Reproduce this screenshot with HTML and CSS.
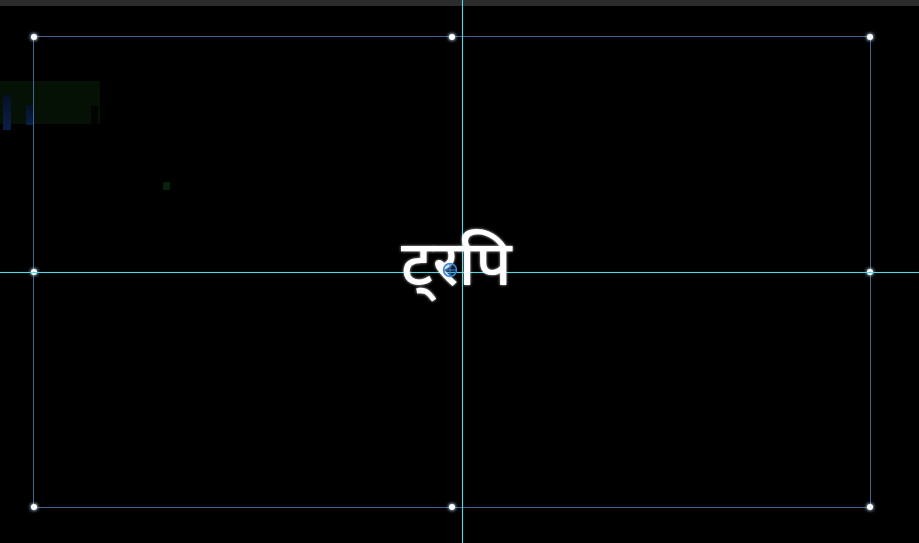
FILE: index.html
```html
<!DOCTYPE html>
<html lang="hi">
<head>
    <meta charset="UTF-8">
    <title>Canvas</title>
    <link rel="stylesheet" href="styles.css">
</head>
<body>
    <div class="topbar"></div>
    <div class="canvas">
        <!-- leftover thumbnails at the left edge -->
        <div class="ghost-strip">
            <span class="ghost-bar ghost-a"></span>
            <span class="ghost-bar ghost-b"></span>
            <span class="ghost-bar ghost-c"></span>
        </div>
        <div class="ghost-dot"></div>

        <!-- selection box with handles -->
        <div class="selection">
            <span class="handle h-tl"></span>
            <span class="handle h-tm"></span>
            <span class="handle h-tr"></span>
            <span class="handle h-ml"></span>
            <span class="handle h-mr"></span>
            <span class="handle h-bl"></span>
            <span class="handle h-bm"></span>
            <span class="handle h-br"></span>
        </div>

        <div class="guide guide-v"></div>
        <div class="guide guide-h"></div>

        <div class="caption">ट्&zwnj;रपि</div>

        <svg class="cursor" width="22" height="22" viewBox="0 0 22 22">
            <circle cx="11" cy="11" r="6.5" fill="rgba(40,110,200,0.25)" stroke="#3a86d8" stroke-width="1.5"/>
            <line x1="5" y1="11" x2="17" y2="11" stroke="#3a86d8" stroke-width="1"/>
            <line x1="11" y1="5" x2="11" y2="17" stroke="#3a86d8" stroke-width="1"/>
        </svg>
    </div>
</body>
</html>
```
FILE: styles.css
```css
:root {
    --frame: #3f6690;
    --guide: #4fd8e0;
    --bar: #2b2b2b;
}

html, body {
    margin: 0;
    padding: 0;
    background: #000;
    width: 919px;
    height: 543px;
    overflow: hidden;
}

.topbar {
    height: 6px;
    background: var(--bar);
}

.canvas {
    position: relative;
    height: 537px;
    background: #000;
}

/* coordinates below are relative to .canvas (page y - 6) */

.ghost-strip {
    position: absolute;
    left: 0;
    top: 75px;
    width: 100px;
    height: 43px;
    background: #061106;
}

.ghost-bar {
    position: absolute;
    width: 8px;
    background: linear-gradient(#061024, #0a1f48);
}

.ghost-a { left: 3px; top: 14px; height: 35px; }
.ghost-b { left: 26px; top: 24px; height: 20px; }
.ghost-c { left: 91px; top: 25px; width: 7px; height: 18px; background: #020402; }

.ghost-dot {
    position: absolute;
    left: 163px;
    top: 176px;
    width: 7px;
    height: 8px;
    background: #08200c;
}

.selection {
    position: absolute;
    left: 33px;
    top: 30px;
    width: 836px;
    height: 470px;
    border: 1px solid var(--frame);
}

.handle {
    position: absolute;
    width: 6px;
    height: 6px;
    margin: -3.5px 0 0 -3.5px;
    border-radius: 50%;
    background: #fff;
    box-shadow: 0 0 3px 1px rgba(190, 220, 255, 0.7);
}

.h-tl { left: 0; top: 0; }
.h-tm { left: 50%; top: 0; }
.h-tr { left: 100%; top: 0; }
.h-ml { left: 0; top: 50%; }
.h-mr { left: 100%; top: 50%; }
.h-bl { left: 0; top: 100%; }
.h-bm { left: 50%; top: 100%; }
.h-br { left: 100%; top: 100%; }

.guide {
    position: absolute;
    background: var(--guide);
    box-shadow: 0 0 1px rgba(79, 216, 224, 0.6);
}

.guide-v {
    left: 462px;
    top: -6px;
    width: 1px;
    height: 543px;
}

.guide-h {
    left: 0;
    top: 266px;
    width: 919px;
    height: 1px;
}

.caption {
    position: absolute;
    left: 401px;
    top: 233px;
    color: #fff;
    font-family: "Noto Sans Devanagari", "Lohit Devanagari", "Noto Sans", sans-serif;
    font-size: 62px;
    font-weight: 500;
    line-height: 1;
    text-shadow: 0 0 3px rgba(255, 255, 255, 0.8);
}

.cursor {
    position: absolute;
    left: 439px;
    top: 253px;
}
```
